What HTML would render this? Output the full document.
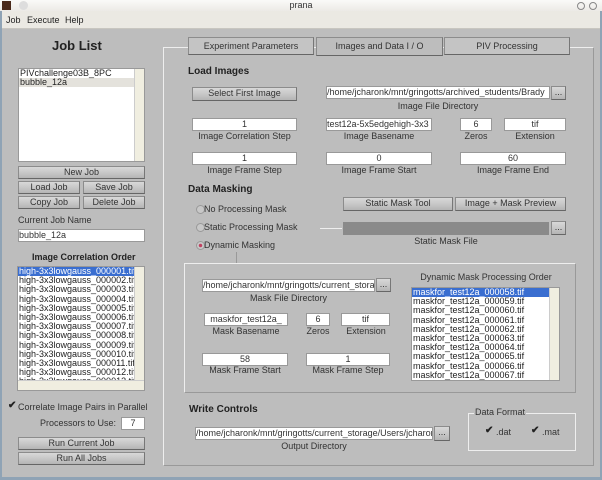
<!DOCTYPE html>
<html><head><meta charset="utf-8">
<style>
*{box-sizing:border-box;margin:0;padding:0}
body{width:602px;height:480px;overflow:hidden;background:#8fa3b5;font-family:"Liberation Sans",sans-serif;font-size:9px;color:#222;position:relative}
.a{position:absolute}
#win{position:absolute;left:2px;top:0;width:598px;height:477px;background:#bdbdbd}
#title{position:absolute;left:0;top:0;width:602px;height:11px;background:linear-gradient(#fafaf8,#eceae6);font-size:9px;text-align:center;line-height:11px;color:#333}
#menu{position:absolute;left:2px;top:11px;width:598px;height:18px;background:#ebe9e3;border-bottom:1px solid #c8c6c0}
#menu span{position:absolute;top:4px;font-size:9px;color:#222}
.btn{position:absolute;background:linear-gradient(#d8d8d8,#c4c4c4 60%,#b4b4b4);border:1px solid #8c8c8c;border-right-color:#777;border-bottom-color:#666;text-align:center;font-size:9px;line-height:11px;color:#333}
.in{position:absolute;background:#fff;border:1px solid #999;font-size:9px;line-height:11px;text-align:center;color:#333;overflow:hidden;white-space:nowrap}
.lbl{position:absolute;font-size:9px;color:#333;text-align:center;white-space:nowrap}
.h{position:absolute;font-weight:bold;font-size:10px;color:#222}
.lb{position:absolute;background:#fff;border:1px solid #999;overflow:hidden}
.lb div{font-size:9px;line-height:9.2px;white-space:nowrap;padding-left:1px}
.sel{background:#3a6ed0;color:#fff}
.sb{position:absolute;right:0;top:0;width:10px;height:100%;background:#f0eee0;border-left:1px solid #ccc}
.rad{position:absolute;width:9px;height:9px;border-radius:50%;border:1px solid #999;background:#c8c8c8}
.chk{position:absolute;width:9px;height:9px;font-size:10px;line-height:8px;font-weight:bold}
.panel{position:absolute;border:1px solid #eee;border-right-color:#999;border-bottom-color:#999}
</style></head><body>
<div id="win"></div>
<div id="title">prana
<div class="a" style="left:2px;top:1px;width:9px;height:9px;background:#4a2a1a"></div>
<div class="a" style="left:19px;top:1px;width:9px;height:9px;border-radius:50%;background:#ddd"></div>
<div class="a" style="left:577px;top:2px;width:8px;height:8px;border-radius:50%;border:1px solid #888"></div>
<div class="a" style="left:589px;top:2px;width:8px;height:8px;border-radius:50%;border:1px solid #888"></div>
</div>
<div id="menu"><span style="left:4px">Job</span><span style="left:25px">Execute</span><span style="left:63px">Help</span></div>

<div class="a" style="left:52px;top:38px;font-size:13px;font-weight:bold;color:#222">Job List</div>
<div class="lb" style="left:18px;top:68px;width:127px;height:94px">
<div>PIVchallenge03B_8PC</div><div style="background:#e4e2dc">bubble_12a</div>
<div class="sb"></div></div>
<div class="btn" style="left:18px;top:166px;width:127px;height:13px">New Job</div>
<div class="btn" style="left:18px;top:181px;width:62px;height:13px">Load Job</div>
<div class="btn" style="left:83px;top:181px;width:62px;height:13px">Save Job</div>
<div class="btn" style="left:18px;top:196px;width:62px;height:13px">Copy Job</div>
<div class="btn" style="left:83px;top:196px;width:62px;height:13px">Delete Job</div>
<div class="lbl" style="left:18px;top:215px;text-align:left">Current Job Name</div>
<div class="in" style="left:18px;top:229px;width:127px;height:13px;text-align:left">bubble_12a</div>
<div class="a" style="left:32px;top:252px;font-weight:bold;font-size:9px;color:#222">Image Correlation Order</div>
<div class="lb" style="left:17px;top:266px;width:128px;height:125px">
<div class="sel">high-3x3lowgauss_000001.tif</div>
<div>high-3x3lowgauss_000002.tif</div><div>high-3x3lowgauss_000003.tif</div><div>high-3x3lowgauss_000004.tif</div><div>high-3x3lowgauss_000005.tif</div><div>high-3x3lowgauss_000006.tif</div><div>high-3x3lowgauss_000007.tif</div><div>high-3x3lowgauss_000008.tif</div><div>high-3x3lowgauss_000009.tif</div><div>high-3x3lowgauss_000010.tif</div><div>high-3x3lowgauss_000011.tif</div><div>high-3x3lowgauss_000012.tif</div><div>high-3x3lowgauss_000013.tif</div>
<div class="sb" style="height:115px"></div>
<div class="a" style="left:0;bottom:0;width:127px;height:10px;background:#f0eee0;border-top:1px solid #ccc"></div>
</div>
<div class="chk" style="left:8px;top:402px">✔</div>
<div class="lbl" style="left:18px;top:402px">Correlate Image Pairs in Parallel</div>
<div class="lbl" style="left:40px;top:418px">Processors to Use:</div>
<div class="in" style="left:121px;top:417px;width:24px;height:13px">7</div>
<div class="btn" style="left:18px;top:437px;width:127px;height:13px">Run Current Job</div>
<div class="btn" style="left:18px;top:452px;width:127px;height:13px">Run All Jobs</div>

<div class="panel" style="left:163px;top:47px;width:431px;height:419px"></div>
<div class="btn" style="left:188px;top:37px;width:126px;height:18px;line-height:16px;background:#c4c4c4">Experiment Parameters</div>
<div class="btn" style="left:316px;top:37px;width:127px;height:19px;line-height:16px;background:#bdbdbd">Images and Data I / O</div>
<div class="btn" style="left:444px;top:37px;width:126px;height:18px;line-height:16px;background:#c4c4c4">PIV Processing</div>

<div class="h" style="left:188px;top:66px">Load Images</div>
<div class="btn" style="left:192px;top:87px;width:105px;height:14px">Select First Image</div>
<div class="in" style="left:326px;top:86px;width:224px;height:13px;text-align:left">/home/jcharonk/mnt/gringotts/archived_students/Brady</div>
<div class="btn" style="left:551px;top:86px;width:15px;height:14px">...</div>
<div class="lbl" style="left:326px;top:101px;width:224px">Image File Directory</div>
<div class="in" style="left:192px;top:118px;width:105px;height:13px">1</div>
<div class="lbl" style="left:172px;top:131px;width:145px">Image Correlation Step</div>
<div class="in" style="left:326px;top:118px;width:106px;height:13px;text-align:left">test12a-5x5edgehigh-3x3</div>
<div class="lbl" style="left:326px;top:131px;width:106px">Image Basename</div>
<div class="in" style="left:460px;top:118px;width:32px;height:13px">6</div>
<div class="lbl" style="left:456px;top:131px;width:40px">Zeros</div>
<div class="in" style="left:504px;top:118px;width:62px;height:13px">tif</div>
<div class="lbl" style="left:504px;top:131px;width:62px">Extension</div>
<div class="in" style="left:192px;top:152px;width:105px;height:13px">1</div>
<div class="lbl" style="left:192px;top:165px;width:105px">Image Frame Step</div>
<div class="in" style="left:326px;top:152px;width:106px;height:13px">0</div>
<div class="lbl" style="left:316px;top:165px;width:126px">Image Frame Start</div>
<div class="in" style="left:460px;top:152px;width:106px;height:13px">60</div>
<div class="lbl" style="left:460px;top:165px;width:106px">Image Frame End</div>

<div class="h" style="left:188px;top:184px">Data Masking</div>
<div class="rad" style="left:196px;top:205px"></div><div class="lbl" style="left:204px;top:204px">No Processing Mask</div>
<div class="rad" style="left:196px;top:223px"></div><div class="lbl" style="left:204px;top:222px">Static Processing Mask</div>
<div class="rad" style="left:196px;top:241px;background:radial-gradient(#c04060 30%,#c8c8c8 40%)"></div><div class="lbl" style="left:204px;top:240px">Dynamic Masking</div>
<div class="a" style="left:320px;top:228px;width:22px;height:1px;background:#eee"></div>
<div class="btn" style="left:343px;top:197px;width:110px;height:14px">Static Mask Tool</div>
<div class="btn" style="left:455px;top:197px;width:111px;height:14px">Image + Mask Preview</div>
<div class="a" style="left:343px;top:222px;width:206px;height:13px;background:#8a8a8a"></div>
<div class="btn" style="left:551px;top:221px;width:15px;height:14px">...</div>
<div class="lbl" style="left:343px;top:236px;width:206px">Static Mask File</div>

<div class="panel" style="left:184px;top:263px;width:392px;height:130px"></div>
<div class="a" style="left:236px;top:252px;width:1px;height:11px;background:#999"></div>
<div class="in" style="left:202px;top:279px;width:173px;height:13px;text-align:left">/home/jcharonk/mnt/gringotts/current_storage</div>
<div class="btn" style="left:376px;top:278px;width:15px;height:14px">...</div>
<div class="lbl" style="left:202px;top:293px;width:173px">Mask File Directory</div>
<div class="in" style="left:204px;top:313px;width:84px;height:13px">maskfor_test12a_</div>
<div class="lbl" style="left:204px;top:326px;width:84px">Mask Basename</div>
<div class="in" style="left:306px;top:313px;width:24px;height:13px">6</div>
<div class="lbl" style="left:300px;top:326px;width:36px">Zeros</div>
<div class="in" style="left:341px;top:313px;width:49px;height:13px">tif</div>
<div class="lbl" style="left:336px;top:326px;width:60px">Extension</div>
<div class="in" style="left:202px;top:353px;width:86px;height:13px">58</div>
<div class="lbl" style="left:192px;top:365px;width:106px">Mask Frame Start</div>
<div class="in" style="left:306px;top:353px;width:84px;height:13px">1</div>
<div class="lbl" style="left:298px;top:365px;width:100px">Mask Frame Step</div>
<div class="lbl" style="left:411px;top:272px;width:150px">Dynamic Mask Processing Order</div>
<div class="lb" style="left:411px;top:287px;width:149px;height:94px">
<div class="sel">maskfor_test12a_000058.tif</div><div>maskfor_test12a_000059.tif</div><div>maskfor_test12a_000060.tif</div><div>maskfor_test12a_000061.tif</div><div>maskfor_test12a_000062.tif</div><div>maskfor_test12a_000063.tif</div><div>maskfor_test12a_000064.tif</div><div>maskfor_test12a_000065.tif</div><div>maskfor_test12a_000066.tif</div><div>maskfor_test12a_000067.tif</div>
<div class="sb"></div></div>

<div class="h" style="left:189px;top:404px">Write Controls</div>
<div class="in" style="left:195px;top:427px;width:238px;height:13px;text-align:left">/home/jcharonk/mnt/gringotts/current_storage/Users/jcharonk</div>
<div class="btn" style="left:434px;top:426px;width:16px;height:15px">...</div>
<div class="lbl" style="left:195px;top:441px;width:238px">Output Directory</div>
<div class="panel" style="left:468px;top:413px;width:108px;height:38px;border-color:#eee"></div>
<div class="lbl" style="left:474px;top:407px;background:#bdbdbd;padding:0 1px">Data Format</div>
<div class="chk" style="left:485px;top:427px">✔</div><div class="lbl" style="left:496px;top:427px">.dat</div>
<div class="chk" style="left:531px;top:427px">✔</div><div class="lbl" style="left:542px;top:427px">.mat</div>
</body></html>
